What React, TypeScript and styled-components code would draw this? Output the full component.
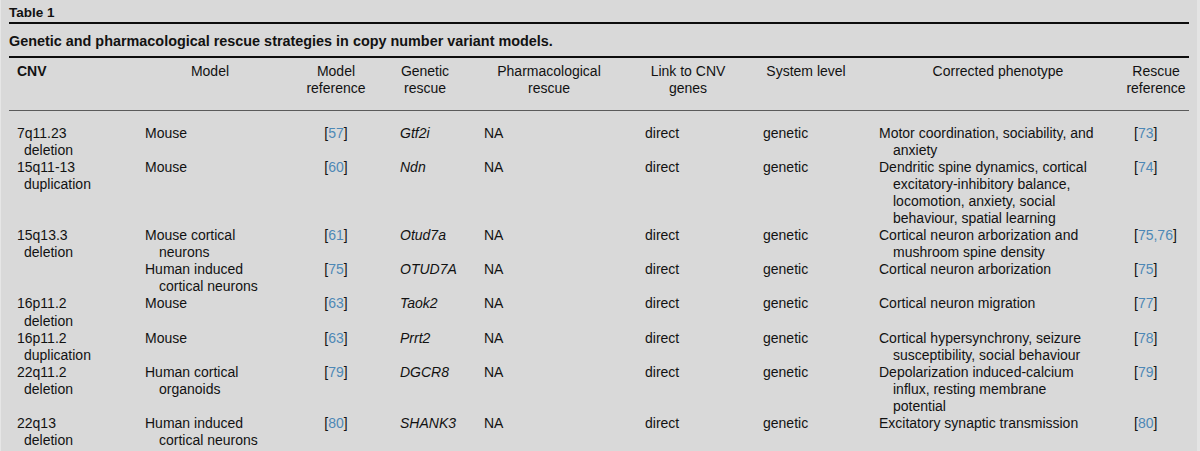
import React from "react";
import styled, { createGlobalStyle } from "styled-components";

const GlobalStyle = createGlobalStyle`
  html, body {
    margin: 0;
    padding: 0;
    background: #d9d9d9;
  }
  body {
    font-family: "Liberation Sans", Arial, Helvetica, sans-serif;
    color: #121212;
  }
`;

const COLUMNS = "132px 138px 114px 64px 184px 94px 142px 242px 74px";
const LINE = "17.1px";

const Page = styled.div`
  box-sizing: border-box;
  width: 1200px;
  height: 451px;
  overflow: hidden;
  padding: 4px 8px 0 8px;
  border-left: 1px solid #e6e6e6;
  border-right: 3px solid #e4e4e4;
`;

const TableLabel = styled.div`
  font-weight: bold;
  font-size: 13.5px;
  line-height: 17px;
  margin-bottom: 1px;
`;

const Rule = styled.div<{ $tone?: "dark" | "grey" }>`
  height: ${(p) => (p.$tone === "grey" ? "1.5px" : "2px")};
  background: ${(p) => (p.$tone === "grey" ? "#5a5a5a" : "#0d0d0d")};
`;

const Caption = styled.div`
  font-weight: bold;
  font-size: 14.4px;
  line-height: 17px;
  padding: 9px 0 6px 0;
`;

const HeaderRow = styled.div`
  display: grid;
  grid-template-columns: ${COLUMNS};
  font-size: 14px;
  line-height: 17.5px;
  padding: 4.5px 0 12px 0;
`;

const HeaderCell = styled.div<{ $align?: "left" | "center"; $bold?: boolean }>`
  text-align: ${(p) => p.$align ?? "center"};
  font-weight: ${(p) => (p.$bold ? "bold" : "normal")};
  padding-left: ${(p) => (p.$align === "left" ? "8px" : "0")};
`;

const Body = styled.div`
  padding-top: 13.5px;
`;

const Row = styled.div`
  display: grid;
  grid-template-columns: ${COLUMNS};
  font-size: 14px;
  line-height: ${LINE};
`;

const Cell = styled.div<{ $pad: number; $center?: boolean }>`
  padding-left: ${(p) => p.$pad}px;
  text-align: ${(p) => (p.$center ? "center" : "left")};
  white-space: nowrap;
`;

const Line = styled.div<{ $indent: number }>`
  padding-left: ${(p) => p.$indent}px;
`;

const Gene = styled.i`
  font-style: italic;
`;

const RefLink = styled.span`
  color: #4d88b6;
`;

const Refs: React.FC<{ ids: number[] }> = ({ ids }) => (
  <>
    [
    {ids.map((id, i) => (
      <React.Fragment key={id}>
        {i > 0 && <RefLink>,</RefLink>}
        <RefLink>{id}</RefLink>
      </React.Fragment>
    ))}
    ]
  </>
);

type RowData = {
  cnv: string[];
  model: string[];
  modelRef: number[];
  gene: string;
  pharm: string;
  link: string;
  system: string;
  phenotype: string[];
  rescueRef: number[];
};

const rows: RowData[] = [
  {
    cnv: ["7q11.23", "deletion"],
    model: ["Mouse"],
    modelRef: [57],
    gene: "Gtf2i",
    pharm: "NA",
    link: "direct",
    system: "genetic",
    phenotype: ["Motor coordination, sociability, and", "anxiety"],
    rescueRef: [73],
  },
  {
    cnv: ["15q11-13", "duplication"],
    model: ["Mouse"],
    modelRef: [60],
    gene: "Ndn",
    pharm: "NA",
    link: "direct",
    system: "genetic",
    phenotype: [
      "Dendritic spine dynamics, cortical",
      "excitatory-inhibitory balance,",
      "locomotion, anxiety, social",
      "behaviour, spatial learning",
    ],
    rescueRef: [74],
  },
  {
    cnv: ["15q13.3", "deletion"],
    model: ["Mouse cortical", "neurons"],
    modelRef: [61],
    gene: "Otud7a",
    pharm: "NA",
    link: "direct",
    system: "genetic",
    phenotype: ["Cortical neuron arborization and", "mushroom spine density"],
    rescueRef: [75, 76],
  },
  {
    cnv: [],
    model: ["Human induced", "cortical neurons"],
    modelRef: [75],
    gene: "OTUD7A",
    pharm: "NA",
    link: "direct",
    system: "genetic",
    phenotype: ["Cortical neuron arborization"],
    rescueRef: [75],
  },
  {
    cnv: ["16p11.2", "deletion"],
    model: ["Mouse"],
    modelRef: [63],
    gene: "Taok2",
    pharm: "NA",
    link: "direct",
    system: "genetic",
    phenotype: ["Cortical neuron migration"],
    rescueRef: [77],
  },
  {
    cnv: ["16p11.2", "duplication"],
    model: ["Mouse"],
    modelRef: [63],
    gene: "Prrt2",
    pharm: "NA",
    link: "direct",
    system: "genetic",
    phenotype: ["Cortical hypersynchrony, seizure", "susceptibility, social behaviour"],
    rescueRef: [78],
  },
  {
    cnv: ["22q11.2", "deletion"],
    model: ["Human cortical", "organoids"],
    modelRef: [79],
    gene: "DGCR8",
    pharm: "NA",
    link: "direct",
    system: "genetic",
    phenotype: ["Depolarization induced-calcium", "influx, resting membrane", "potential"],
    rescueRef: [79],
  },
  {
    cnv: ["22q13", "deletion"],
    model: ["Human induced", "cortical neurons"],
    modelRef: [80],
    gene: "SHANK3",
    pharm: "NA",
    link: "direct",
    system: "genetic",
    phenotype: ["Excitatory synaptic transmission"],
    rescueRef: [80],
  },
];

const Lines: React.FC<{ lines: string[]; indent: number }> = ({ lines, indent }) => (
  <>
    {lines.map((l, i) => (
      <Line key={i} $indent={i === 0 ? 0 : indent}>
        {l}
      </Line>
    ))}
  </>
);

export default function App() {
  return (
    <>
      <GlobalStyle />
      <Page>
        <TableLabel>Table 1</TableLabel>
        <Rule />
        <Caption>
          Genetic and pharmacological rescue strategies in copy number variant models.
        </Caption>
        <Rule />
        <HeaderRow>
          <HeaderCell $align="left" $bold>
            CNV
          </HeaderCell>
          <HeaderCell>Model</HeaderCell>
          <HeaderCell>
            Model
            <br />
            reference
          </HeaderCell>
          <HeaderCell>
            Genetic
            <br />
            rescue
          </HeaderCell>
          <HeaderCell>
            Pharmacological
            <br />
            rescue
          </HeaderCell>
          <HeaderCell>
            Link to CNV
            <br />
            genes
          </HeaderCell>
          <HeaderCell>System level</HeaderCell>
          <HeaderCell>Corrected phenotype</HeaderCell>
          <HeaderCell>
            Rescue
            <br />
            reference
          </HeaderCell>
        </HeaderRow>
        <Rule $tone="grey" />
        <Body>
          {rows.map((r, i) => (
            <Row key={i}>
              <Cell $pad={8}>
                <Lines lines={r.cnv} indent={7} />
              </Cell>
              <Cell $pad={4}>
                <Lines lines={r.model} indent={14} />
              </Cell>
              <Cell $pad={0} $center>
                <Refs ids={r.modelRef} />
              </Cell>
              <Cell $pad={7}>
                <Gene>{r.gene}</Gene>
              </Cell>
              <Cell $pad={27}>{r.pharm}</Cell>
              <Cell $pad={4}>{r.link}</Cell>
              <Cell $pad={28}>{r.system}</Cell>
              <Cell $pad={2}>
                <Lines lines={r.phenotype} indent={14} />
              </Cell>
              <Cell $pad={15}>
                <Refs ids={r.rescueRef} />
              </Cell>
            </Row>
          ))}
        </Body>
      </Page>
    </>
  );
}
